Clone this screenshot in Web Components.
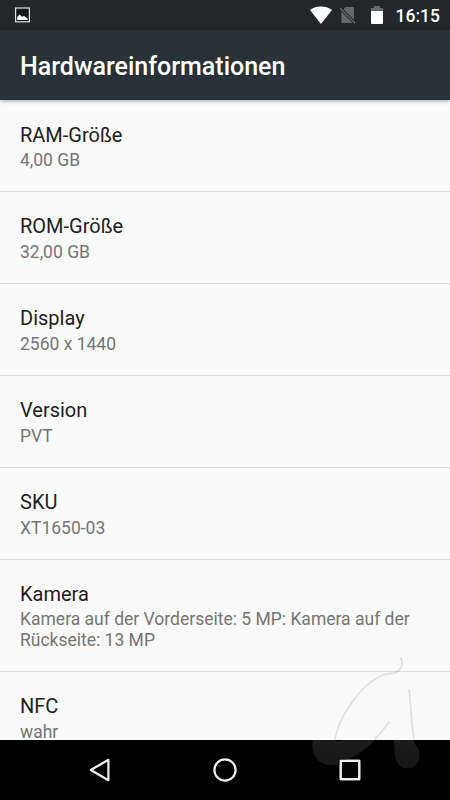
<!DOCTYPE html>
<html lang="de">
<head>
<meta charset="utf-8">
<title>Hardwareinformationen</title>
<style>
html, body { margin: 0; height: 100%; }
body { font-family: Roboto, sans-serif; background: #fafafa; overflow: hidden; }
</style>
</head>
<body>
<phone-screen>
  <status-bar slot="status" time="16:15"></status-bar>
  <app-bar slot="bar">Hardwareinformationen</app-bar>
  <info-row><span slot="title">RAM-Größe</span>4,00 GB</info-row>
  <info-row><span slot="title">ROM-Größe</span>32,00 GB</info-row>
  <info-row><span slot="title">Display</span>2560 x 1440</info-row>
  <info-row><span slot="title">Version</span>PVT</info-row>
  <info-row><span slot="title">SKU</span>XT1650-03</info-row>
  <info-row><span slot="title">Kamera</span>Kamera auf der Vorderseite: 5 MP: Kamera auf der Rückseite: 13 MP</info-row>
  <info-row><span slot="title">NFC</span>wahr</info-row>
  <nav-bar slot="nav"></nav-bar>
  <brand-mark slot="overlay"></brand-mark>
</phone-screen>
<script>
const define = (name, html, setup) => customElements.define(name, class extends HTMLElement {
  constructor() {
    super();
    this.attachShadow({ mode: 'open' }).innerHTML = html;
  }
  connectedCallback() { if (setup) setup(this); }
});

define('phone-screen', `
<style>
:host { display: flex; flex-direction: column; width: 450px; height: 800px; position: relative; overflow: hidden; background: #fafafa; }
main { flex: 1; min-height: 0; overflow: hidden; display: flex; flex-direction: column; padding-top: .6px; }
</style>
<slot name="status"></slot><slot name="bar"></slot>
<main><slot></slot></main>
<slot name="nav"></slot><slot name="overlay"></slot>`);

define('status-bar', `
<style>
:host { display: flex; flex: none; align-items: center; height: 30px; box-sizing: border-box; padding: 0 10px 0 15px; background: #22272b; color: #fff; }
svg { display: block; flex: none; }
.spacer { flex: 1; }
.wifi { margin-right: 7px; }
.sim { margin-right: 15px; }
.battery { margin-right: 13px; }
time { font-size: 17.5px; line-height: 30px; font-weight: 500; padding-top: 2px; }
</style>
<svg width="15" height="16" viewBox="0 0 15 16"><rect x=".6" y="1" width="13.8" height="13.8" fill="#14191d" stroke="#dfe1e2" stroke-width="1.2"/><path d="M2.2 13V10.3L4.7 7.6 6.8 9.8 9.3 9 12.8 12V13Z" fill="#fff"/></svg>
<span class="spacer"></span>
<svg class="wifi" width="22" height="18" viewBox="0 0 22 18"><path d="M11 18 0 3.9C6.4-.7 15.6-.7 22 3.9Z" fill="#fff"/></svg>
<svg class="sim" width="17" height="18" viewBox="0 0 17 18"><path d="M6.4 1H13.8Q15 1 15 2V14.3L4 3.4ZM2.4 5.6 13.6 16.9H3.4Q2.4 16.9 2.4 15.9Z" fill="#64686b"/><path d="M1.2 2.3 16.2 17.3" stroke="#64686b" stroke-width="1.5"/><path d="M3.3 2.7 15.6 15" stroke="#22272b" stroke-width="1"/></svg>
<svg class="battery" width="12" height="18" viewBox="0 0 12 18"><path d="M3 0H9V2H12V5.5H0V2H3Z" fill="#64686b"/><path d="M0 5H12V17Q12 18 11 18H1Q0 18 0 17Z" fill="#fff"/></svg>
<time></time>`, el => {
  el.shadowRoot.querySelector('time').textContent = el.getAttribute('time');
});

define('app-bar', `
<style>
:host { display: flex; flex: none; align-items: center; height: 70px; box-sizing: border-box; padding: 2px 20px 0; background: #283238; color: #fff; font-size: 25px; font-weight: 500; box-shadow: 0 1px 4px rgba(0,0,0,.35); position: relative; }
</style><slot></slot>`);

define('info-row', `
<style>
:host { display: block; flex: none; box-sizing: border-box; padding: 22px 20px 20.78px; border-bottom: 1px solid #dadada; }
.title { font-size: 20px; line-height: 24px; color: #212121; }
.summary { font-size: 17.5px; line-height: 20.5px; padding-top: 3.6px; color: #757575; }
</style>
<div class="title"><slot name="title"></slot></div>
<div class="summary"><slot></slot></div>`);

define('nav-bar', `
<style>
:host { display: flex; flex: none; height: 60px; background: #000; justify-content: center; align-items: center; gap: 101px; }
svg { display: block; fill: none; stroke: #eee; stroke-width: 2.2; stroke-linejoin: round; }
</style>
<svg width="24" height="24" viewBox="0 0 24 24"><path d="M20.4 1.8V22.2L2.8 12Z"/></svg>
<svg width="24" height="24" viewBox="0 0 24 24"><circle cx="12" cy="12" r="10.6"/></svg>
<svg width="24" height="24" viewBox="0 0 24 24"><rect x="2.8" y="2.8" width="18.4" height="18.4"/></svg>`);

define('brand-mark', `
<style>
:host { display: block; position: absolute; left: 290px; top: 630px; width: 160px; height: 170px; pointer-events: none; }
svg { display: block; }
</style>
<svg width="160" height="170" viewBox="0 0 160 170" fill="none">
<defs><linearGradient id="dark" x1="0" y1="110" x2="0" y2="138" gradientUnits="userSpaceOnUse"><stop stop-color="#1c1c1c"/><stop offset="1" stop-color="#161616"/></linearGradient><filter id="soft"><feGaussianBlur stdDeviation=".6"/></filter></defs>
<g filter="url(#soft)" stroke="#000" stroke-opacity=".1" stroke-width="1.8" stroke-linecap="round">
<path d="M111 28C113 33 113 38 107 42C101 45 96 42 87 48C68 59 50 87 46 105Q45 107 45 109"/>
<path d="M119 60C121 73 121 93 124 109M99 92Q92 102 85 109"/></g>
<path d="M23 110H45Q46 112 50 111L54 110H85C76 119 68 125 61 128L50 132V134C44 136 35 136 29 131C23 126 21 117 23 110Z" fill="url(#dark)"/><path d="M104 110H124Q124 114 128 118C132 127 128 136 121 138C114 140 107 135 106 129C104 123 104 116 104 110Z" fill="url(#dark)"/>
<rect x="50" y="130" width="20" height="20" fill="#000"/>
<rect x="50.8" y="130.8" width="18.4" height="18.4" stroke="#eee" stroke-width="2.2" stroke-linejoin="round"/>
</svg>`);
</script>
</body>
</html>
